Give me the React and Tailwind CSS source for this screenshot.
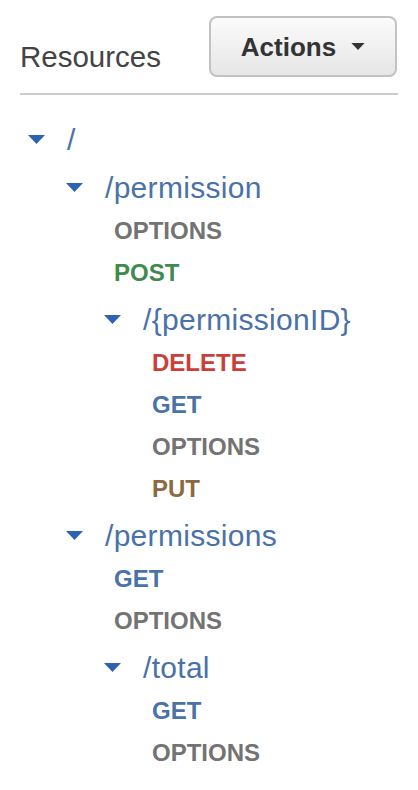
import React from "react";

const methodColors = {
  GET: "text-[#4a72a8]",
  POST: "text-[#3f8a4d]",
  PUT: "text-[#8c6a3f]",
  DELETE: "text-[#c9403b]",
  OPTIONS: "text-[#737373]",
};

const tree = {
  path: "/",
  methods: [],
  children: [
    {
      path: "/permission",
      methods: ["OPTIONS", "POST"],
      children: [
        {
          path: "/{permissionID}",
          methods: ["DELETE", "GET", "OPTIONS", "PUT"],
          children: [],
        },
      ],
    },
    {
      path: "/permissions",
      methods: ["GET", "OPTIONS"],
      children: [
        {
          path: "/total",
          methods: ["GET", "OPTIONS"],
          children: [],
        },
      ],
    },
  ],
};

function Caret({ className }) {
  return (
    <svg viewBox="0 0 17 9" className={className} fill="currentColor">
      <path d="M0 0h17L8.5 9z" />
    </svg>
  );
}

function Resource({ node }) {
  return (
    <div>
      {/* resource row */}
      <div className="h-[48px] pt-[3px] flex items-center">
        <Caret className="w-[17px] h-[9px] text-[#2d63b4] shrink-0" />
        <span className="ml-[22px] text-[30px] leading-[32px] tracking-[0.3px] text-[#4a72a8]">
          {node.path}
        </span>
      </div>

      <div className="pl-[38px]">
        {node.methods.map((m, i) => (
          <div key={i} className="h-[42px] pl-[10px] flex items-center">
            <span
              className={`text-[24px] leading-[28px] font-bold ${methodColors[m]}`}
            >
              {m}
            </span>
          </div>
        ))}
        {node.children.map((child) => (
          <Resource key={child.path} node={child} />
        ))}
      </div>
    </div>
  );
}

export default function App() {
  return (
    <div className="w-[418px] min-h-[790px] bg-white font-['Liberation_Sans',Arial,sans-serif]">
      {/* Header */}
      <div className="px-[20px] pt-[16px]">
        <div className="flex items-start justify-between pr-[1px]">
          <h2 className="mt-[25px] text-[29.5px] leading-[32px] text-[#444]">
            Resources
          </h2>
          <button className="w-[188px] h-[61px] rounded-[8px] border-2 border-[#c2c2c2] bg-gradient-to-b from-[#fbfbfb] to-[#e6e6e6] flex items-center justify-center gap-[15px]">
            <span className="text-[26px] leading-[30px] font-bold text-[#333]">
              Actions
            </span>
            <Caret className="w-[14px] h-[7px] text-[#333]" />
          </button>
        </div>
        <div className="mt-[16px] h-[2px] bg-[#cccccc]" />
      </div>

      {/* Tree */}
      <div className="pl-[28px] pt-[19px]">
        <Resource node={tree} />
      </div>
    </div>
  );
}
